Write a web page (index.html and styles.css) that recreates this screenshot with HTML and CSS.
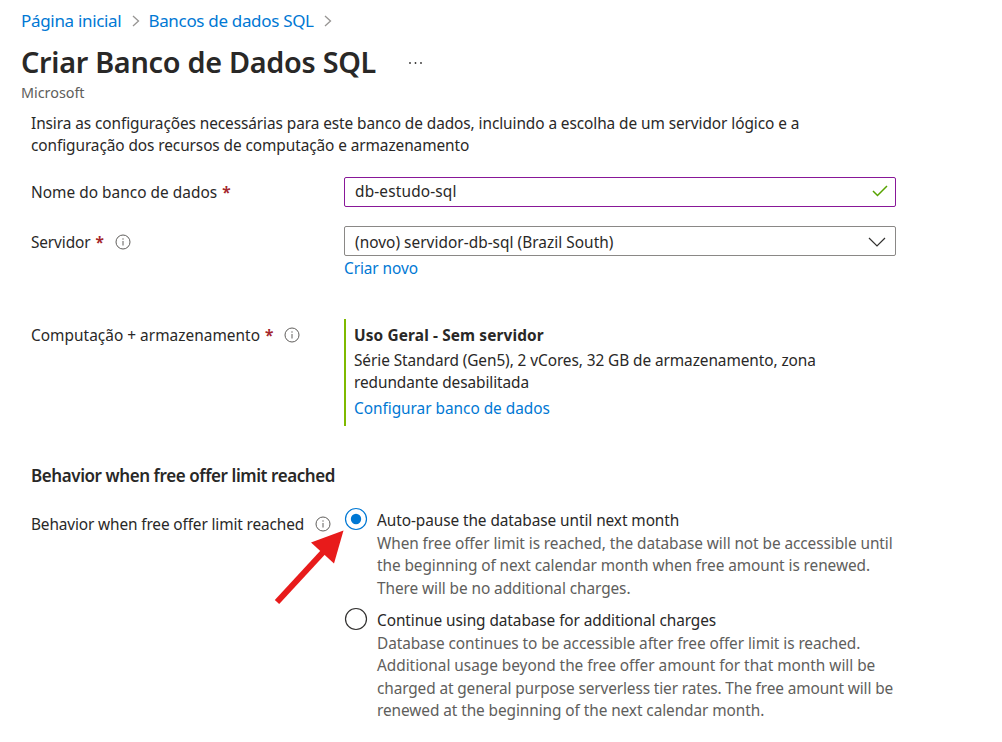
FILE: index.html
```html
<!DOCTYPE html>
<html lang="pt-BR">
<head>
<meta charset="utf-8">
<title>Criar Banco de Dados SQL</title>
<link rel="stylesheet" href="styles.css">
</head>
<body>
<nav class="crumbs">
  <a>Página inicial</a>
  <svg class="chev" width="8" height="12" viewBox="0 0 8 12"><path d="M1 1l5.500 5L1 11"/></svg>
  <a>Bancos de dados SQL</a>
  <svg class="chev" width="8" height="12" viewBox="0 0 8 12"><path d="M1 1l5.500 5L1 11"/></svg>
</nav>
<header class="head">
  <h1>Criar Banco de Dados SQL</h1>
  <svg class="dots" width="16" height="4" viewBox="0 0 16 4"><circle cx="2" cy="2" r=".9"/><circle cx="7.500" cy="2" r=".9"/><circle cx="13" cy="2" r=".9"/></svg>
</header>
<div class="sub">Microsoft</div>
<main>
  <p class="intro">Insira as configurações necessárias para este banco de dados, incluindo a escolha de um servidor lógico e a<br>configuração dos recursos de computação e armazenamento</p>
  <div class="row name">
    <label class="label"><span>Nome do banco de dados</span><b>*</b></label>
    <div class="field valid"><span>db-estudo-sql</span><svg width="16" height="12" viewBox="0 0 16 12"><path d="M1 6l4.500 4.500L15 1"/></svg></div>
  </div>
  <div class="row server">
    <label class="label"><span class="plain">Servidor</span><b>*</b><svg class="info" width="16" height="16" viewBox="0 0 16 16"><circle cx="8" cy="8" r="7"/><path d="M8 7v4.500M8 4.300v1.400"/></svg></label>
    <div class="field select"><span>(novo) servidor-db-sql (Brazil South)</span><svg width="18" height="10" viewBox="0 0 18 10"><path d="M1 1l8 8 8-8"/></svg></div>
  </div>
  <a class="new">Criar novo</a>
  <div class="row compute">
    <label class="label"><span>Computação + armazenamento</span><b>*</b><svg class="info" width="16" height="16" viewBox="0 0 16 16"><circle cx="8" cy="8" r="7"/><path d="M8 7v4.500M8 4.300v1.400"/></svg></label>
    <div class="card">
      <strong>Uso Geral - Sem servidor</strong>
      <p>Série Standard (Gen5), 2 vCores, 32 GB de armazenamento, zona<br>redundante desabilitada</p>
      <a>Configurar banco de dados</a>
    </div>
  </div>
  <h2>Behavior when free offer limit reached</h2>
  <div class="row behavior">
    <label class="label"><span class="plain">Behavior when free offer limit reached</span><svg class="info" width="16" height="16" viewBox="0 0 16 16"><circle cx="8" cy="8" r="7"/><path d="M8 7v4.500M8 4.300v1.400"/></svg></label>
    <div class="options">
      <div class="option"><svg class="radio on" width="24" height="24" viewBox="0 0 24 24"><circle cx="12" cy="12" r="10.500"/><circle class="dot" cx="12" cy="12" r="5.200"/></svg><div><div class="ot">Auto-pause the database until next month</div><p>When free offer limit is reached, the database will not be accessible until<br>the beginning of next calendar month when free amount is renewed.<br>There will be no additional charges.</p></div></div>
      <div class="option"><svg class="radio" width="24" height="24" viewBox="0 0 24 24"><circle cx="12" cy="12" r="10.500"/></svg><div><div class="ot">Continue using database for additional charges</div><p>Database continues to be accessible after free offer limit is reached.<br><span class="wide">Additional usage beyond the free offer amount for that month will be</span><br><span class="tight">charged at general purpose serverless tier rates. The free amount will be</span><br>renewed at the beginning of the next calendar month.</p></div></div>
    </div>
  </div>
</main>
<svg class="arrow" width="76" height="84" viewBox="270 525 76 84"><path class="shaft" d="M277 602L326 549"/><path class="tip" d="M343.500 530.500L311 542.500L334 563.500Z"/></svg>
</body>
</html>
```

FILE: styles.css
```css
* { box-sizing: border-box; }
body { margin: 0; height: 742px; overflow: hidden; background: #fff; color: #292827; font: 15.4px/22.4px "Noto Sans", sans-serif; letter-spacing: -.08px; }
a { color: #0078d4; }
p, h1, h2 { margin: 0; }
svg { fill: none; stroke: #605e5c; flex: none; }
.crumbs { display: flex; align-items: center; height: 42px; padding-left: 21px; font-size: 17px; letter-spacing: -.32px; white-space: nowrap; }
.chev { margin: 0 8.5px 0 10.5px; stroke: #979593; stroke-width: 1.3; }
.head { display: flex; align-items: center; height: 42px; padding-left: 21px; }
h1 { font-size: 28.8px; font-weight: 600; line-height: 40px; margin-bottom: 2px; letter-spacing: -.28px; white-space: nowrap; }
.dots { margin-left: 32px; fill: #323130; stroke: none; }
.sub { padding-left: 21px; font-size: 14.4px; line-height: 18px; letter-spacing: -.03px; color: #605e5c; }
main { padding: 11px 0 0 31px; }
.intro { white-space: nowrap; }
.row { display: flex; white-space: nowrap; }
.label { display: flex; width: 313px; align-items: center; gap: 5px; height: 32px; letter-spacing: .03px; margin-bottom: -2px; }
.label b { color: #a4262c; letter-spacing: 0; }
.plain { letter-spacing: -.13px; }
.info { margin-left: 6px; }
.name { margin-top: 19px; }
.server { margin-top: 19px; }
.server .label, .compute .label { height: 34px; margin-bottom: -4px; }
.server .info, .compute .info { margin-bottom: 2px; }
.behavior .label { height: 30px; }
.behavior .info { margin-bottom: 2px; }
.field { display: flex; width: 552px; height: 30px; align-items: center; justify-content: space-between; border: 1px solid #8a8886; border-radius: 2px; padding: 0 9px 0 10px; }
.field span { padding-top: 2px; }
.valid { border-color: #881798; padding: 0 7px 2px 10px; letter-spacing: .16px; }
.valid svg { stroke: #57a300; stroke-width: 1.5; }
.select { padding-top: 2px; letter-spacing: .03px; }
.select svg { stroke: #323130; stroke-width: 1.2; }
.new { display: block; margin: 2px 0 0 313px; }
.compute { margin-top: 39px; }
.card { border-left: 2px solid #7fba00; padding: 6px 0 0 8px; height: 107px; }
.card strong { letter-spacing: .13px; }
.card p { margin: 2px 0 4px; }
.card a { letter-spacing: -.03px; }
h2 { margin-top: 39px; font-size: 17px; line-height: 22px; font-weight: 600; letter-spacing: -.42px; }
.behavior { margin-top: 23px; }
.option { display: flex; gap: 9px; height: 100px; line-height: 22.5px; }
.radio { margin-top: -3px; stroke: #323130; stroke-width: 1.2; }
.on { stroke: #0078d4; }
.dot { fill: #0078d4; stroke: none; }
.option p { color: #605e5c; }
.wide { letter-spacing: -.03px; }
.tight { letter-spacing: -.12px; }
.arrow { position: absolute; left: 270px; top: 525px; }
.shaft { stroke: #e81b1b; stroke-width: 6; }
.tip { fill: #e81b1b; stroke: none; }
```
